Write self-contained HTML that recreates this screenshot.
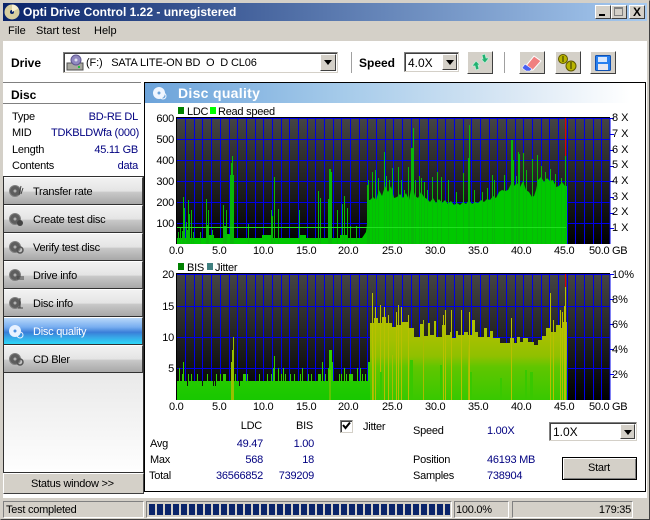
<!DOCTYPE html>
<html><head><meta charset="utf-8">
<style>
html,body{margin:0;padding:0;background:#fff}
#w{position:relative;width:650px;height:520px;overflow:hidden;background:#fff;font:11px "Liberation Sans",sans-serif;color:#000}
#w div,#w span.t{position:absolute;box-sizing:border-box}
.t{position:absolute;white-space:nowrap;line-height:14px;letter-spacing:-.25px}
.l{letter-spacing:0}
.n{color:#000080}
.b{font-weight:bold}
.out{background:#d4d0c8;border:1px solid;border-color:#fff #404040 #404040 #fff}
.sink{background:#fff;border:1px solid;border-color:#808080 #d4d0c8 #d4d0c8 #808080;box-shadow:inset 1px 1px 0 #404040}
.arr{background:#d4d0c8;border:1px solid;border-color:#fff #404040 #404040 #fff}
.arr:after{content:"";position:absolute;left:3px;top:5px;border:4px solid transparent;border-top:5px solid #000;border-bottom:0}
.nav{left:4px;width:139px;height:28px;background:linear-gradient(#f2f2f2 0,#e4e4e4 50%,#c8c8c8 55%,#a8a8a8 100%);border-top:1px solid #fff;border-bottom:1px solid #303030;border-right:1px solid #404040}
.p{background:#d4d0c8;border:1px solid;border-color:#808080 #fff #fff #808080}
svg{position:absolute;left:0;top:0}
</style></head><body><div id="w">

<!-- window frame -->
<div style="left:0;top:0;width:650px;height:520px;background:#d4d0c8;border:1px solid;border-color:#d4d0c8 #404040 #404040 #d4d0c8"></div>
<div style="left:3px;top:3px;width:644px;height:18px;background:linear-gradient(90deg,#0a246a,#a6caf0)"></div>
<span class="t b l" style="left:23px;top:5px;font-size:12px;color:#fff">Opti Drive Control 1.22 - unregistered</span>
<div class="out" style="left:595px;top:5px;width:16px;height:14px"></div>
<div class="out" style="left:611px;top:5px;width:16px;height:14px"></div>
<div class="out" style="left:629px;top:5px;width:16px;height:14px"></div>
<div style="left:599px;top:14px;width:6px;height:2px;background:#000"></div>
<div style="left:614px;top:7px;width:9px;height:9px;border:1px solid #808080;border-top-width:2px"></div>
<span class="t b l" style="left:633px;top:5px;font-size:12px">X</span>
<!-- menu -->
<span class="t l" style="left:8px;top:24px">File</span>
<span class="t l" style="left:36px;top:24px">Start test</span>
<span class="t l" style="left:94px;top:24px">Help</span>
<!-- client -->
<div style="left:3px;top:41px;width:644px;height:457px;background:#fff"></div>

<!-- toolbar -->
<span class="t b l" style="left:11px;top:56px;font-size:12px">Drive</span>
<div class="sink" style="left:63px;top:52px;width:275px;height:21px"></div>
<span class="t" style="left:86px;top:56px;letter-spacing:-.15px">(F:)&nbsp;&nbsp; SATA LITE-ON BD&nbsp; O&nbsp; D CL06</span>
<div class="arr" style="left:320px;top:54px;width:16px;height:17px"></div>
<div style="left:351px;top:52px;width:1px;height:21px;background:#a0a0a0"></div>
<span class="t b l" style="left:359px;top:56px;font-size:12px">Speed</span>
<div class="sink" style="left:404px;top:52px;width:55px;height:20px"></div>
<span class="t l" style="left:408px;top:56px;font-size:12px">4.0X</span>
<div class="arr" style="left:442px;top:54px;width:15px;height:16px"></div>
<div class="out" style="left:467px;top:51px;width:26px;height:23px"></div>
<div style="left:504px;top:52px;width:1px;height:21px;background:#a0a0a0"></div>
<div class="out" style="left:519px;top:51px;width:26px;height:23px"></div>
<div class="out" style="left:555px;top:51px;width:26px;height:23px"></div>
<div class="out" style="left:590px;top:51px;width:26px;height:23px"></div>

<!-- left panel -->
<div style="left:3px;top:82px;width:138px;height:1px;background:#808080"></div>
<div style="left:3px;top:103px;width:138px;height:1px;background:#808080"></div>
<span class="t b l" style="left:11px;top:88px;font-size:12px">Disc</span>
<span class="t" style="left:12px;top:110px">Type</span><span class="t n" style="right:512px;top:110px">BD-RE DL</span>
<span class="t" style="left:12px;top:126px">MID</span><span class="t n" style="right:511px;top:126px">TDKBLDWfa (000)</span>
<span class="t" style="left:12px;top:143px">Length</span><span class="t n" style="right:512px;top:143px">45.11 GB</span>
<span class="t" style="left:12px;top:159px">Contents</span><span class="t n" style="right:512px;top:159px">data</span>
<div style="left:3px;top:176px;width:141px;height:297px;border:1px solid #303030;background:linear-gradient(#c0c0c0,#fefefe)"></div>
<div class="nav" style="top:177px"></div>
<div class="nav" style="top:205px"></div>
<div class="nav" style="top:233px"></div>
<div class="nav" style="top:261px"></div>
<div class="nav" style="top:289px"></div>
<div class="nav" style="top:317px;background:linear-gradient(#b8d8fa 0,#78aef0 35%,#3a7ed8 55%,#38a8e8 75%,#2cd8f8 100%)"></div>
<div class="nav" style="top:345px"></div>
<span class="t" style="left:33px;top:185px">Transfer rate</span>
<span class="t" style="left:33px;top:213px">Create test disc</span>
<span class="t" style="left:33px;top:241px">Verify test disc</span>
<span class="t" style="left:33px;top:269px">Drive info</span>
<span class="t" style="left:33px;top:297px">Disc info</span>
<span class="t" style="left:33px;top:325px;color:#fff">Disc quality</span>
<span class="t" style="left:33px;top:353px">CD Bler</span>
<div class="out" style="left:3px;top:473px;width:141px;height:21px"></div>
<span class="t" style="left:31px;top:477px">Status window &gt;&gt;</span>

<!-- main frame -->
<div style="left:144px;top:82px;width:502px;height:410px;border:1px solid #000"></div>
<div style="left:145px;top:83px;width:500px;height:20px;background:linear-gradient(90deg,#6ca3da 0,#a6cbea 40%,#dce9f5 75%,#fff 97%)"></div>
<span class="t b l" style="left:178px;top:86px;font-size:14px;color:#fff;letter-spacing:.3px">Disc quality</span>

<svg width="650" height="520" viewBox="0 0 650 520">
<defs>
<linearGradient id="bg1" x1="0" y1="0" x2="0" y2="1"><stop offset="0" stop-color="#454545"/><stop offset="1" stop-color="#000"/></linearGradient>
<linearGradient id="j" gradientUnits="userSpaceOnUse" x1="0" y1="290" x2="0" y2="400"><stop offset="0" stop-color="#c0c000"/><stop offset=".45" stop-color="#a4c000"/><stop offset=".6" stop-color="#90c000"/><stop offset=".7" stop-color="#60c600"/><stop offset="1" stop-color="#38c800"/></linearGradient>
<linearGradient id="g2" gradientUnits="userSpaceOnUse" x1="0" y1="362" x2="0" y2="400"><stop offset="0" stop-color="#30cc00"/><stop offset="1" stop-color="#18c800"/></linearGradient>
</defs>

<!-- nav icons -->
<g fill="#5e5e5e" stroke="#808080">
<circle cx="15" cy="191" r="5.500"/><circle cx="15" cy="219" r="5.500"/><circle cx="15" cy="247" r="5.500"/><circle cx="15" cy="275" r="5.500"/><circle cx="15" cy="303" r="5.500"/><circle cx="15" cy="359" r="5.500"/>
</g>
<g fill="#b0b0b0"><circle cx="15" cy="191" r="1.500"/><circle cx="15" cy="219" r="1.500"/><circle cx="15" cy="247" r="1.500"/><circle cx="15" cy="275" r="1.500"/><circle cx="15" cy="303" r="1.500"/><circle cx="15" cy="359" r="1.500"/></g>
<path d="M21 186l-2 9M23 188l-2 6" stroke="#444" fill="none"/>
<circle cx="20" cy="223" r="3" fill="#444"/>
<circle cx="20" cy="250" r="3" fill="none" stroke="#555" stroke-width="1.500"/>
<path d="M17 277h7M17 279h7" stroke="#444"/>
<path d="M20 298v10M18 308h5" stroke="#444" fill="none"/>
<circle cx="20" cy="362" r="3" fill="none" stroke="#555" stroke-width="1.500"/>
<circle cx="15" cy="331" r="6" fill="#e8f2ff"/><circle cx="15" cy="331" r="1.500" fill="#4a90e0"/><circle cx="20" cy="335" r="3" fill="none" stroke="#e8f2ff"/>

<!-- title icon -->
<circle cx="12" cy="12" r="7.500" fill="#d8cfa0"/><circle cx="12" cy="12" r="2" fill="#0a246a"/><path d="M12 4.500a7.500 7.500 0 0 1 6.500 4l-6.500 3.500z" fill="#f8f0d0"/>
<!-- drive icon -->
<rect x="67" y="63" width="16" height="7" fill="#a8a8a0" stroke="#505050"/><rect x="78" y="66" width="2" height="2" fill="#20c040"/>
<circle cx="76" cy="60" r="5" fill="#9088c0" stroke="#605890"/><circle cx="76" cy="60" r="1.500" fill="#e0e0f0"/>
<!-- header icon -->
<circle cx="159" cy="93" r="6" fill="#f0f6ff"/><circle cx="159" cy="93" r="1.500" fill="#6ca3da"/><circle cx="163" cy="96" r="3" fill="none" stroke="#f0f6ff"/>
<!-- refresh -->
<path d="M472 66l4-5 4 4-2 0 1 4-3 1-1-4zM489 58l-4 5-4-4 2 0-1-4 3-1 1 4z" fill="#20b070" stroke="#c0f0d8" stroke-width=".7"/>
<!-- eraser -->
<path d="M534 56l7 5-8 9-5 0-3-3z" fill="#f08080" stroke="#fff"/><path d="M525 64l7 5-2 2-4 0-4-3z" fill="#4860f0" stroke="#fff" stroke-width=".6"/>
<!-- chain -->
<circle cx="563" cy="59" r="4.500" fill="#b8b400" stroke="#605800"/><circle cx="571" cy="66" r="5" fill="#b8b400" stroke="#605800"/><path d="M563 56v6M571 62v7" stroke="#303000"/>
<!-- save -->
<rect x="595.500" y="55.500" width="15" height="15" rx="1" fill="#2880f0" stroke="#1050b0"/><rect x="598" y="57" width="9" height="5" fill="#d8e8ff"/><rect x="598" y="64" width="10" height="6" fill="#e8e8f0"/>

<!-- CHART 1 -->
<rect x="176" y="118" width="434" height="126" fill="url(#bg1)"/>
<path d="M176.500 118.500H610M176.500 139.500H610M176.500 160.500H610M176.500 181.500H610M176.500 202.500H610M176.500 223.500H610M185.500 118V244M194.500 118V244M202.500 118V244M211.500 118V244M220.500 118V244M229.500 118V244M237.500 118V244M246.500 118V244M255.500 118V244M263.500 118V244M272.500 118V244M281.500 118V244M289.500 118V244M298.500 118V244M307.500 118V244M315.500 118V244M324.500 118V244M333.500 118V244M341.500 118V244M350.500 118V244M359.500 118V244M367.500 118V244M376.500 118V244M385.500 118V244M393.500 118V244M402.500 118V244M411.500 118V244M419.500 118V244M428.500 118V244M437.500 118V244M445.500 118V244M454.500 118V244M463.500 118V244M471.500 118V244M480.500 118V244M489.500 118V244M497.500 118V244M506.500 118V244M515.500 118V244M523.500 118V244M532.500 118V244M541.500 118V244M549.500 118V244M558.500 118V244M567.500 118V244M575.500 118V244M584.500 118V244M593.500 118V244M601.500 118V244M610 118V244" stroke="#0000e8" fill="none"/>
<path d="M176 117.500H610M176.500 117V244" stroke="#000" fill="none"/>
<path d="M565.500 118V156" stroke="#e00000"/>
<path d="M610 118.500h4M610 134.500h4M610 150.500h4M610 166.500h4M610 181.500h4M610 197.500h4M610 213.500h4M610 228.500h4" stroke="#0000e8"/>
<!-- bulk -->
<path d="M177 238H206V235H214V238H226V234H232V238H262V235H272V238H300V235H306V238H340V235H348V238H362L366 232 370 200 373 197 376 200 379 190 382 196 385 186 388 192 391 186 394 198 397 197 400 194 403 198 406 193 409 200 412 184 415 196 418 198 421 192 424 197 427 199 430 202 433 198 436 203 439 199 442 203 445 200 448 204 451 201 454 205 457 203 460 205 463 202 466 204 469 200 472 204 475 202 478 203 481 200 484 202 487 199 490 200 493 196 496 198 499 192 502 190 505 191 508 190 511 184 514 186 517 183 520 187 523 181 526 190 529 192 532 197 534 196 536 190 538 180 541 177 544 182 547 178 550 181 553 180 556 187 559 186 562 182 565 186 567 186V244H177Z" fill="#00c800"/>
<!-- spikes -->
<path d="M178.500 232V244M180.500 228V244M182.500 231V244M183.500 197V244M184.500 208V244M186.500 222V244M187.500 230V244M188.500 200V244M189.500 214V244M191.500 210V244M193.500 232V244M200.500 232V244M206.500 199V244M207.500 225V244M208.500 210V244M212.500 230V244M224.500 226V244M225.500 226V244M223.500 205V244M226.500 210V244M230.500 175V244M231.500 163V244M232.500 156V244M233.500 175V244M248.500 224V244M271.500 210V244M272.500 216V244M274.500 177V244M278.500 209V244M299.500 210V244M318.500 191V244M320.500 198V244M328.500 199V244M329.500 169V244M330.500 169V244M331.500 172V244M337.500 210V244M342.500 204V244M344.500 196V244M347.500 208V244M350.500 226V244M356.500 226V244M367.500 185V244M368.500 180V244M369.500 200V244M372.500 172V244M375.500 170V244M378.500 178V244M384.500 152V244M386.500 176V244M389.500 180V244M392.500 168V244M398.500 167V244M401.500 180V244M404.500 190V244M408.500 167V244M411.500 148V244M412.500 148V244M413.500 128V244M415.500 180V244M419.500 176V244M421.500 178V244M424.500 182V244M427.500 190V244M432.500 177V244M437.500 172V244M441.500 177V244M448.500 180V244M456.500 192V244M463.500 173V244M468.500 158V244M469.500 125V244M474.500 190V244M482.500 192V244M487.500 188V244M492.500 175V244M494.500 180V244M504.500 175V244M511.500 140V244M512.500 140V244M513.500 160V244M516.500 176V244M518.500 152V244M519.500 154V244M523.500 153V244M526.500 170V244M532.500 159V244M537.500 155V244M541.500 166V244M545.500 172V244M550.500 169V244M555.500 174V244M561.500 178V244M565.500 156V244" stroke="#08b808" fill="none"/>
<path d="M177 227.500H566" stroke="#20e020"/>

<!-- CHART 2 -->
<rect x="176" y="274" width="434" height="126" fill="url(#bg1)"/>
<path d="M176.500 274.500H610M176.500 306.500H610M176.500 337.500H610M176.500 368.500H610M185.500 274V400M194.500 274V400M202.500 274V400M211.500 274V400M220.500 274V400M229.500 274V400M237.500 274V400M246.500 274V400M255.500 274V400M263.500 274V400M272.500 274V400M281.500 274V400M289.500 274V400M298.500 274V400M307.500 274V400M315.500 274V400M324.500 274V400M333.500 274V400M341.500 274V400M350.500 274V400M359.500 274V400M367.500 274V400M376.500 274V400M385.500 274V400M393.500 274V400M402.500 274V400M411.500 274V400M419.500 274V400M428.500 274V400M437.500 274V400M445.500 274V400M454.500 274V400M463.500 274V400M471.500 274V400M480.500 274V400M489.500 274V400M497.500 274V400M506.500 274V400M515.500 274V400M523.500 274V400M532.500 274V400M541.500 274V400M549.500 274V400M558.500 274V400M567.500 274V400M575.500 274V400M584.500 274V400M593.500 274V400M601.500 274V400M610 274V400" stroke="#0000e8" fill="none"/>
<path d="M176 273.500H610M176.500 273V400" stroke="#000" fill="none"/>
<path d="M565.500 274V288" stroke="#e00000"/>
<path d="M177 381H370V400H177Z" fill="url(#g2)"/>
<path d="M179.500 368V381M182.500 374V381M183.500 362V381M188.500 374V381M191.500 374V381M197.500 374V381M207.500 374V381M216.500 374V381M220.500 374V381M223.500 374V381M224.500 374V381M225.500 374V381M235.500 374V381M243.500 374V381M244.500 374V381M245.500 374V381M247.500 374V381M259.500 374V381M267.500 374V381M271.500 374V381M273.500 368V381M274.500 356V381M278.500 368V381M281.500 374V381M283.500 368V381M285.500 374V381M290.500 374V381M294.500 374V381M300.500 374V381M302.500 368V381M308.500 374V381M311.500 374V381M318.500 374V381M319.500 374V381M320.500 374V381M322.500 362V381M325.500 374V381M328.500 368V381M329.500 350V381M330.500 350V381M331.500 350V381M332.500 362V381M339.500 374V381M341.500 374V381M344.500 368V381M346.500 374V381M349.500 374V381M350.500 374V381M351.500 374V381M352.500 374V381M357.500 368V381M360.500 368V381M362.500 374V381M365.500 374V381M368.500 362V381M369.500 362V381" stroke="#30cc00" fill="none"/>
<path d="M232.500 350V400M233.500 337V400M231.500 362V400" stroke="#98c000" fill="none"/>
<path d="M329.500 370V400M330.500 370V400" stroke="#60c400" fill="none"/>
<path d="M187.500 381V386M202.500 381V386M213.500 381V386M215.500 381V386M239.500 381V386" stroke="#101010" fill="none"/>
<path d="M370 323H374V318H378V323H382V317H386V323H392V327H396V325H402V322H408V328H414V337H420V324H424V336H428V323H430V335H434V321H436V337H442V325H446V335H450V332H452V338H456V331H458V335H464V332H468V335H472V320H475V332H478V337H484V328H487V337H490V331H493V338H500V343H510V338H514V343H517V337H520V342H523V338H528V342H534V345H538V340H542V336H546V328H550V332H556V325H560V328H562V322H567V400H370Z" fill="url(#j)"/>
<path d="M372.500 293V400M375.500 307V400M380.500 305V400M384.500 307V400M388.500 315V400M396.500 312V400M398.500 305V400M401.500 307V400M408.500 315V400M443.500 315V400M445.500 310V400M451.500 310V400M461.500 310V400M469.500 312V400M511.500 318V400M550.500 293V400M553.500 320V400M560.500 310V400M562.500 312V400M565.500 287V400M564.500 306V400" stroke="#b8c000" fill="none"/>
<path d="M380 372h2V400h-2zM410 360h3V400h-3zM440 365h2V400h-2zM470 372h2V400h-2zM500 378h2V400h-2zM525 370h2V400h-2zM530 372h3V400h-3z" fill="#38c800"/>
<path d="M373.500 340V400M392.500 355V400M423.500 320V400M468.500 345V400" stroke="#a8bc00" fill="none"/>
<path d="M610 274.500h4M610 299.500h4M610 324.500h4M610 349.500h4M610 374.500h4" stroke="#0000e8"/>
<!-- legend -->
<rect x="178" y="107" width="6" height="7" fill="#008000"/><rect x="210" y="107" width="6" height="7" fill="#00ff00"/>
<rect x="178" y="263" width="6" height="7" fill="#008000"/><rect x="207" y="263" width="6" height="7" fill="#408080"/>
</svg>

<span class="t" style="left:187px;top:105px">LDC</span>
<span class="t" style="left:218px;top:105px">Read speed</span>
<span class="t" style="left:187px;top:261px">BIS</span>
<span class="t" style="left:215px;top:261px">Jitter</span>
<!-- y labels 1 -->
<span class="t" style="right:476px;top:112px">600</span>
<span class="t" style="right:476px;top:133px">500</span>
<span class="t" style="right:476px;top:154px">400</span>
<span class="t" style="right:476px;top:175px">300</span>
<span class="t" style="right:476px;top:196px">200</span>
<span class="t" style="right:476px;top:217px">100</span>
<!-- y labels 2 -->
<span class="t" style="right:476px;top:268px">20</span>
<span class="t" style="right:476px;top:300px">15</span>
<span class="t" style="right:476px;top:331px">10</span>
<span class="t" style="right:476px;top:362px">5</span>
<!-- right labels 1 -->
<span class="t l" style="left:612px;top:111px">8 X</span>
<span class="t l" style="left:612px;top:127px">7 X</span>
<span class="t l" style="left:612px;top:143px">6 X</span>
<span class="t l" style="left:612px;top:158px">5 X</span>
<span class="t l" style="left:612px;top:174px">4 X</span>
<span class="t l" style="left:612px;top:190px">3 X</span>
<span class="t l" style="left:612px;top:205px">2 X</span>
<span class="t l" style="left:612px;top:221px">1 X</span>
<!-- right labels 2 -->
<span class="t l" style="left:612px;top:268px">10%</span>
<span class="t l" style="left:612px;top:293px">8%</span>
<span class="t l" style="left:612px;top:318px">6%</span>
<span class="t l" style="left:612px;top:343px">4%</span>
<span class="t l" style="left:612px;top:368px">2%</span>
<!-- x labels -->
<span class="t" style="left:169px;top:244px">0.0</span><span class="t" style="left:212px;top:244px">5.0</span><span class="t" style="left:253px;top:244px">10.0</span><span class="t" style="left:296px;top:244px">15.0</span><span class="t" style="left:338px;top:244px">20.0</span><span class="t" style="left:382px;top:244px">25.0</span><span class="t" style="left:425px;top:244px">30.0</span><span class="t" style="left:468px;top:244px">35.0</span><span class="t" style="left:511px;top:244px">40.0</span><span class="t" style="left:554px;top:244px">45.0</span><span class="t" style="left:589px;top:244px">50.0</span><span class="t" style="left:612px;top:244px">GB</span>
<span class="t" style="left:169px;top:400px">0.0</span><span class="t" style="left:212px;top:400px">5.0</span><span class="t" style="left:253px;top:400px">10.0</span><span class="t" style="left:296px;top:400px">15.0</span><span class="t" style="left:338px;top:400px">20.0</span><span class="t" style="left:382px;top:400px">25.0</span><span class="t" style="left:425px;top:400px">30.0</span><span class="t" style="left:468px;top:400px">35.0</span><span class="t" style="left:511px;top:400px">40.0</span><span class="t" style="left:554px;top:400px">45.0</span><span class="t" style="left:589px;top:400px">50.0</span><span class="t" style="left:612px;top:400px">GB</span>

<!-- stats -->
<span class="t" style="right:388px;top:419px">LDC</span>
<span class="t" style="right:337px;top:419px">BIS</span>
<span class="t" style="left:150px;top:437px">Avg</span>
<span class="t" style="left:150px;top:453px">Max</span>
<span class="t" style="left:149px;top:469px">Total</span>
<span class="t n" style="right:387px;top:437px">49.47</span>
<span class="t n" style="right:336px;top:437px">1.00</span>
<span class="t n" style="right:387px;top:453px">568</span>
<span class="t n" style="right:336px;top:453px">18</span>
<span class="t n" style="right:387px;top:469px">36566852</span>
<span class="t n" style="right:336px;top:469px">739209</span>
<div class="sink" style="left:340px;top:420px;width:13px;height:13px"></div>
<svg width="650" height="520" viewBox="0 0 650 520" style="pointer-events:none"><path d="M343 425l2.500 3 4.500-5.500" fill="none" stroke="#000" stroke-width="2"/></svg>
<span class="t" style="left:363px;top:420px">Jitter</span>
<span class="t" style="left:413px;top:424px">Speed</span>
<span class="t n" style="left:487px;top:424px">1.00X</span>
<span class="t" style="left:413px;top:453px">Position</span>
<span class="t" style="left:413px;top:469px">Samples</span>
<span class="t n" style="left:487px;top:453px">46193 MB</span>
<span class="t n" style="left:487px;top:469px">738904</span>
<div class="sink" style="left:549px;top:422px;width:88px;height:19px"></div>
<span class="t l" style="left:553px;top:425px;font-size:12px">1.0X</span>
<div class="arr" style="left:620px;top:424px;width:15px;height:15px"></div>
<div style="left:562px;top:457px;width:75px;height:23px;background:#d4d0c8;border:1px solid #000;box-shadow:inset 1px 1px 0 #fff,inset -1px -1px 0 #808080"></div>
<span class="t" style="left:588px;top:461px">Start</span>

<!-- status bar -->
<div style="left:1px;top:498px;width:648px;height:21px;background:#d4d0c8"></div>
<div class="p" style="left:3px;top:501px;width:141px;height:17px"></div>
<span class="t" style="left:6px;top:503px">Test completed</span>
<div class="p" style="left:146px;top:501px;width:306px;height:17px"></div>
<div style="left:149px;top:504px;width:301px;height:11px;background:repeating-linear-gradient(90deg,#0a246a 0,#0a246a 6px,#d4d0c8 6px,#d4d0c8 8px)"></div>
<div class="p" style="left:454px;top:501px;width:55px;height:17px"></div>
<span class="t" style="left:456px;top:503px">100.0%</span>
<div class="p" style="left:512px;top:501px;width:121px;height:17px"></div>
<span class="t" style="right:19px;top:503px">179:35</span>
</div></body></html>
